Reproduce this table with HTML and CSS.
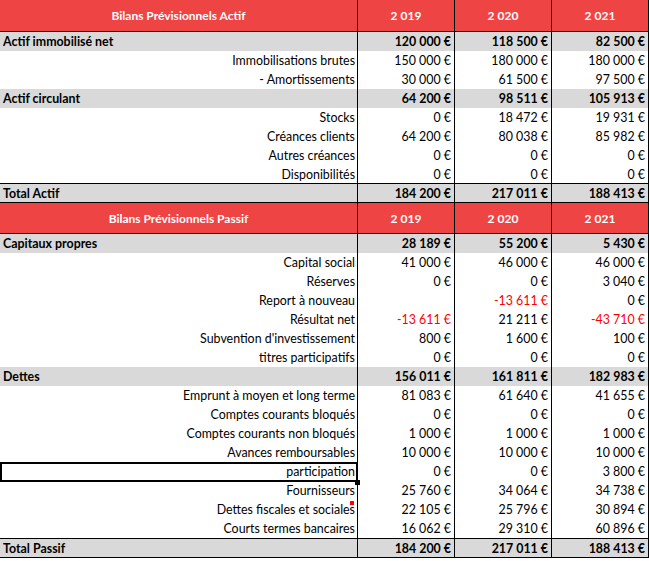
FILE: index.html
```html
<!DOCTYPE html>
<html lang="fr">
<head>
<meta charset="utf-8">
<title>Bilans Prévisionnels</title>
<link rel="stylesheet" href="styles.css">
</head>
<body>
<div class="sheet">
  <div class="row head h1"><div class="cell title">Bilans Prévisionnels Actif</div><div class="cell year">2 019</div><div class="cell year">2 020</div><div class="cell year">2 021</div></div>
  <div class="row sub"><div class="cell lbl">Actif immobilisé net</div><div class="cell num">120 000 €</div><div class="cell num">118 500 €</div><div class="cell num">82 500 €</div></div>
  <div class="row"><div class="cell item">Immobilisations brutes</div><div class="cell num">150 000 €</div><div class="cell num">180 000 €</div><div class="cell num">180 000 €</div></div>
  <div class="row"><div class="cell item">- Amortissements</div><div class="cell num">30 000 €</div><div class="cell num">61 500 €</div><div class="cell num">97 500 €</div></div>
  <div class="row sub"><div class="cell lbl">Actif circulant</div><div class="cell num">64 200 €</div><div class="cell num">98 511 €</div><div class="cell num">105 913 €</div></div>
  <div class="row"><div class="cell item">Stocks</div><div class="cell num">0 €</div><div class="cell num">18 472 €</div><div class="cell num">19 931 €</div></div>
  <div class="row"><div class="cell item">Créances clients</div><div class="cell num">64 200 €</div><div class="cell num">80 038 €</div><div class="cell num">85 982 €</div></div>
  <div class="row"><div class="cell item">Autres créances</div><div class="cell num">0 €</div><div class="cell num">0 €</div><div class="cell num">0 €</div></div>
  <div class="row short"><div class="cell item">Disponibilités</div><div class="cell num">0 €</div><div class="cell num">0 €</div><div class="cell num">0 €</div></div>
  <div class="row sub total"><div class="cell lbl">Total Actif</div><div class="cell num">184 200 €</div><div class="cell num">217 011 €</div><div class="cell num">188 413 €</div></div>
  <div class="row head h2"><div class="cell title">Bilans Prévisionnels Passif</div><div class="cell year">2 019</div><div class="cell year">2 020</div><div class="cell year">2 021</div></div>
  <div class="row sub"><div class="cell lbl">Capitaux propres</div><div class="cell num">28 189 €</div><div class="cell num">55 200 €</div><div class="cell num">5 430 €</div></div>
  <div class="row"><div class="cell item">Capital social</div><div class="cell num">41 000 €</div><div class="cell num">46 000 €</div><div class="cell num">46 000 €</div></div>
  <div class="row"><div class="cell item">Réserves</div><div class="cell num">0 €</div><div class="cell num">0 €</div><div class="cell num">3 040 €</div></div>
  <div class="row"><div class="cell item">Report à nouveau</div><div class="cell num"></div><div class="cell num neg">-13 611 €</div><div class="cell num">0 €</div></div>
  <div class="row"><div class="cell item">Résultat net</div><div class="cell num neg">-13 611 €</div><div class="cell num">21 211 €</div><div class="cell num neg">-43 710 €</div></div>
  <div class="row"><div class="cell item">Subvention d'investissement</div><div class="cell num">800 €</div><div class="cell num">1 600 €</div><div class="cell num">100 €</div></div>
  <div class="row"><div class="cell item">titres participatifs</div><div class="cell num">0 €</div><div class="cell num">0 €</div><div class="cell num">0 €</div></div>
  <div class="row sub"><div class="cell lbl">Dettes</div><div class="cell num">156 011 €</div><div class="cell num">161 811 €</div><div class="cell num">182 983 €</div></div>
  <div class="row"><div class="cell item">Emprunt à moyen et long terme</div><div class="cell num">81 083 €</div><div class="cell num">61 640 €</div><div class="cell num">41 655 €</div></div>
  <div class="row"><div class="cell item">Comptes courants bloqués</div><div class="cell num">0 €</div><div class="cell num">0 €</div><div class="cell num">0 €</div></div>
  <div class="row"><div class="cell item">Comptes courants non bloqués</div><div class="cell num">1 000 €</div><div class="cell num">1 000 €</div><div class="cell num">1 000 €</div></div>
  <div class="row"><div class="cell item">Avances remboursables</div><div class="cell num">10 000 €</div><div class="cell num">10 000 €</div><div class="cell num">10 000 €</div></div>
  <div class="row"><div class="cell item selected">participation<span class="handle"></span></div><div class="cell num">0 €</div><div class="cell num">0 €</div><div class="cell num">3 800 €</div></div>
  <div class="row"><div class="cell item">Fournisseurs</div><div class="cell num">25 760 €</div><div class="cell num">34 064 €</div><div class="cell num">34 738 €</div></div>
  <div class="row"><div class="cell item commented">Dettes fiscales et sociales<span class="note"></span></div><div class="cell num">22 105 €</div><div class="cell num">25 796 €</div><div class="cell num">30 894 €</div></div>
  <div class="row"><div class="cell item">Courts termes bancaires</div><div class="cell num">16 062 €</div><div class="cell num">29 310 €</div><div class="cell num">60 896 €</div></div>
  <div class="row sub total"><div class="cell lbl">Total Passif</div><div class="cell num">184 200 €</div><div class="cell num">217 011 €</div><div class="cell num">188 413 €</div></div>
</div>
</body>
</html>
```

FILE: styles.css
```css
html, body {
  margin: 0;
  padding: 0;
  background: #ffffff;
}

.sheet {
  width: 649px;
  font-family: "Lato", "Liberation Sans", sans-serif;
  font-size: 12.4px;
  color: #000000;
}

.row {
  display: grid;
  grid-template-columns: 358px 97px 97px 97px;
  height: 19px;
  box-sizing: border-box;
}

.row.short {
  height: 18px;
}

.cell {
  box-sizing: border-box;
  border-right: 1px solid #000;
  display: flex;
  align-items: center;
  justify-content: flex-end;
  padding: 2px 3px 0 2px;
  white-space: nowrap;
  line-height: 1;
  position: relative;
}

.item {
  padding-right: 2px;
}

.sub {
  background: #d9d9d9;
  font-weight: bold;
}

.sub .lbl {
  justify-content: flex-start;
  padding-left: 3px;
}

.total {
  height: 20px;
  border-top: 1px solid #000;
  border-bottom: 1px solid #000;
}

.head {
  background: #ef4444;
  color: #ffffff;
  font-weight: bold;
  font-size: 12px;
  border-bottom: 1px solid #000;
}

.head .cell {
  justify-content: center;
  padding: 1px 0 0 0;
}

.h1 {
  height: 32px;
}

.h2 {
  height: 31px;
}

.neg {
  color: #ff0000;
}

.selected::after {
  content: "";
  position: absolute;
  left: 0;
  right: -1px;
  top: 0;
  bottom: -1px;
  border: 2px solid #000;
  pointer-events: none;
}

.handle {
  position: absolute;
  right: -3px;
  bottom: -4px;
  width: 5px;
  height: 5px;
  background: #000;
  z-index: 2;
}

.note {
  position: absolute;
  right: 3px;
  top: 1px;
  width: 4px;
  height: 4px;
  background: #ff0000;
}
```
